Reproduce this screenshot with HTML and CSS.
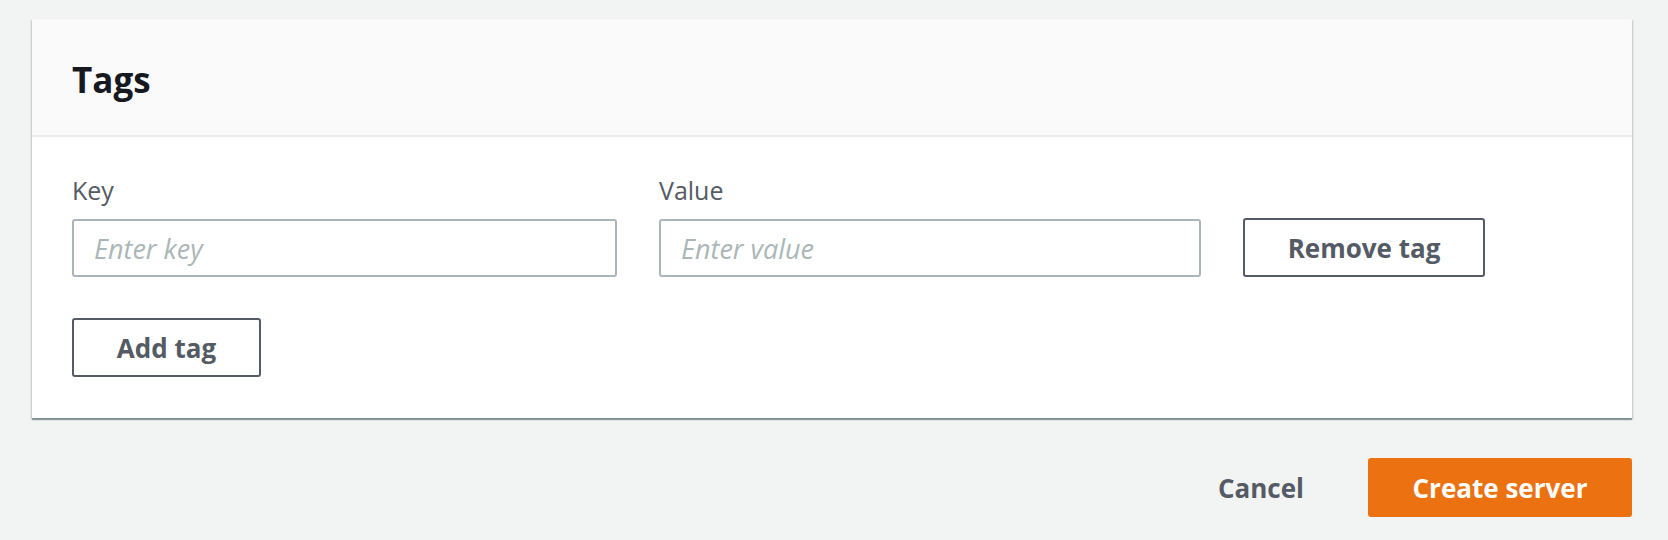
FILE: index.html
```html
<!DOCTYPE html>
<html lang="en">
<head>
<meta charset="utf-8">
<title>Tags</title>
<link rel="stylesheet" href="styles.css">
</head>
<body>
<div class="page">
  <section class="card">
    <header class="card-header">
      <h2 class="card-title">Tags</h2>
    </header>
    <div class="card-body">
      <div class="tag-row">
        <label class="field">
          <span class="field-label">Key</span>
          <input class="field-input" type="text" placeholder="Enter key">
        </label>
        <label class="field">
          <span class="field-label">Value</span>
          <input class="field-input" type="text" placeholder="Enter value">
        </label>
        <button class="btn btn-normal btn-remove" type="button">Remove tag</button>
      </div>
      <button class="btn btn-normal btn-add" type="button">Add tag</button>
    </div>
  </section>
  <div class="actions">
    <button class="btn btn-link" type="button">Cancel</button>
    <button class="btn btn-primary" type="button">Create server</button>
  </div>
</div>
</body>
</html>
```

FILE: styles.css
```css
html, body {
  margin: 0;
  padding: 0;
  background: #f2f3f3;
}

body {
  font-family: "Open Sans", "Noto Sans", "Liberation Sans", sans-serif;
  color: #16191f;
}

.page {
  padding: 19px 36px 0 32px;
}

.card {
  background: #ffffff;
  box-shadow: 0 2px 1px 0 rgba(0, 28, 36, 0.35), 1px 1px 2px 0 rgba(0, 28, 36, 0.15), -1px 1px 2px 0 rgba(0, 28, 36, 0.15);
}

.card-header {
  height: 116px;
  background: #fafafa;
  border-bottom: 2px solid #eaeded;
  display: flex;
  align-items: center;
  padding: 0 40px;
}

.card-title {
  margin: 0;
  font-size: 35px;
  font-weight: 700;
  line-height: 1;
  color: #16191f;
  position: relative;
  top: 2px;
}

.card-body {
  padding: 32px 40px 41px;
  display: flex;
  flex-direction: column;
  align-items: flex-start;
  gap: 41px;
}

.tag-row {
  display: grid;
  grid-template-columns: 545px 542px 242px;
  column-gap: 42px;
  align-items: end;
}

.field {
  display: flex;
  flex-direction: column;
  gap: 8px;
}

.field-label {
  font-size: 25px;
  line-height: 42px;
  color: #545b64;
}

.field-input {
  box-sizing: border-box;
  height: 58px;
  width: 100%;
  margin: 0;
  padding: 0 20px;
  border: 2px solid #aab7b8;
  border-radius: 3px;
  background: #ffffff;
  font-family: inherit;
  font-size: 27px;
  color: #16191f;
  outline: none;
}

.field-input::placeholder {
  color: #aab7b8;
  font-style: italic;
  opacity: 1;
}

.btn {
  box-sizing: border-box;
  height: 59px;
  margin: 0;
  padding: 0 20px;
  border-radius: 3px;
  font-family: inherit;
  font-size: 26px;
  font-weight: 700;
  line-height: 1;
  cursor: pointer;
}

.btn-normal {
  background: #ffffff;
  border: 2px solid #545b64;
  color: #545b64;
}

.btn-remove {
  width: 242px;
}

.btn-add {
  width: 189px;
}

.actions {
  display: flex;
  justify-content: flex-end;
  align-items: center;
  gap: 44px;
  padding-top: 40px;
}

.btn-link {
  background: transparent;
  border: none;
  color: #545b64;
  padding: 0 20px;
}

.btn-primary {
  width: 264px;
  background: #ec7211;
  border: none;
  color: #ffffff;
}
```
